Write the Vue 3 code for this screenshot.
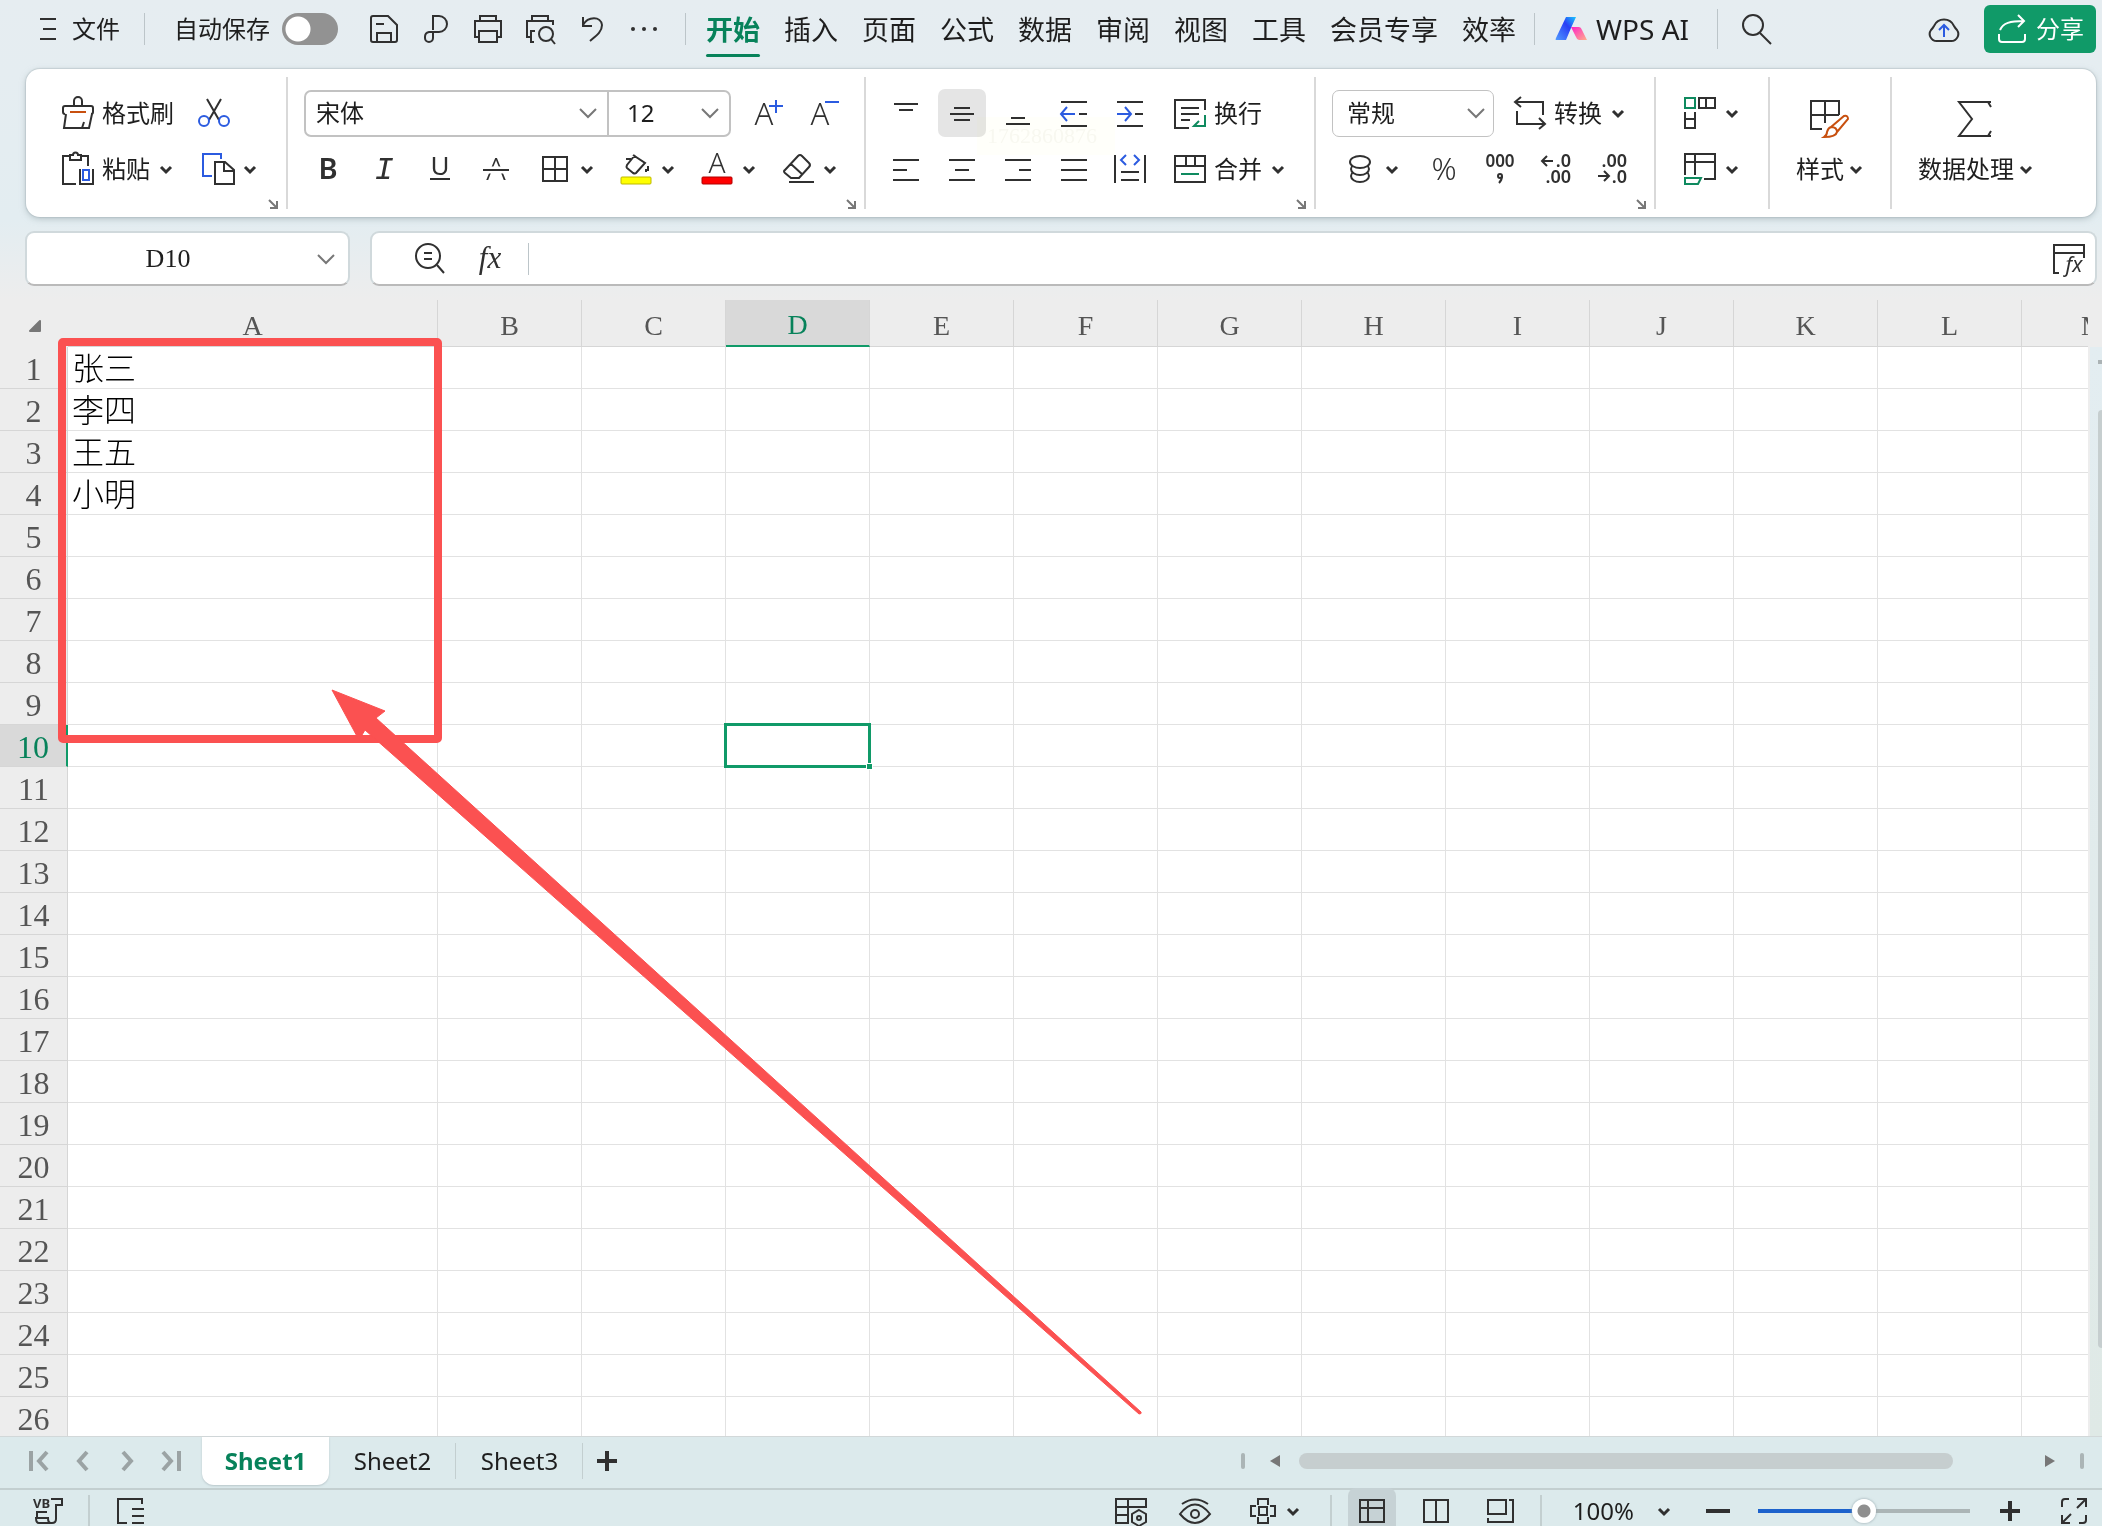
<script setup>
import { ref } from 'vue'

const autosave = ref(false)
const zoom = ref(50)
const nameBox = ref('D10')
const formula = ref('')

const G = '#0f8a5f'
const B = '#2b5be0'
const icons = {
  burger: '<path d="M0 2h16M3 12h13M0 22h16"/>',
  save: '<path d="M8 29H5a2 2 0 0 1-2-2V5a2 2 0 0 1 2-2h15l9 9v15a2 2 0 0 1-2 2h-3M8 11h8M9 29v-9h14v9z"/>',
  pdf: '<path d="M13 17V3h6a8 8 0 0 1 0 16H9a5 5 0 0 0-4 5v1a4 4 0 0 0 4 4a4 4 0 0 0 4-4v-6"/>',
  print: '<path d="M8 8V3h16v5M6 24H3V8h26v16h-3M7 18h18v11H7z"/>',
  preview: '<path d="M8 8V3h16v5M6 24H3V8h26v4M10 29H7V18h4"/><circle cx="22" cy="21" r="7"/><path d="M27 26l4 5"/>',
  undo: '<path d="M7 4v9h9M7 12C12 3 25 3 26 12c0 7-6 11-12 16"/>',
  more: '<g fill="#303030" stroke="none"><circle cx="5" cy="16" r="2"/><circle cx="16" cy="16" r="2"/><circle cx="27" cy="16" r="2"/></g>',
  search: '<circle cx="12" cy="12" r="10"/><path d="M19 20l11 11"/>',
  cloud: '<path d="M9 28a7 7 0 0 1-6-11q2-2 3-4a11 11 0 0 1 20 0q1 2 3 4a7 7 0 0 1-6 11z"/><path stroke="' + B + '" d="M16 24V12M11 17l5-5 5 5"/>',
  share: '<path stroke="#fff" d="M3 21v5a3 3 0 0 0 3 3h20a3 3 0 0 0 3-3v-5M4 17c3-7 10-9 24-9M22 2l6 6-6 6"/>',
  brush: '<path d="M12 9V4a4 4 0 0 1 8 0v5M3 17q-2 0-2-2v-4q0-2 2-2h26q2 0 2 2v4q0 2-2 2M4 17L2 31h25l3-14M22 25l-2 6"/><path stroke="#c8500f" d="M8 15h16"/>',
  cut: '<path d="M9 2l12 21M23 2L11 23"/><g stroke="' + B + '"><circle cx="6" cy="24" r="5"/><circle cx="26" cy="24" r="5"/></g>',
  paste: '<path d="M8 3H1v28h13M20 3h6v10M8 2h3a2 2 0 0 1 5 0h3v5H8zM18 16v15h13V16"/><path stroke="' + B + '" d="M21 17h6v10h-6z"/>',
  copy: '<path stroke="' + B + '" d="M10 23H1V1h18v5"/><path d="M13 9h10l9 8v14H13zM22 9v9h9"/>',
  chev: '<path stroke-width="3" d="M1 4l5 5 5-5"/>',
  launcher: '<path stroke="#777" d="M1 1l8 8M9 2v7H2"/>',
  grow: '<text x="9" y="28" font-size="31" font-weight="300" text-anchor="middle">A</text><path stroke="' + B + '" d="M21 3v13M14 9h14"/>',
  shrink: '<text x="9" y="28" font-size="31" font-weight="300" text-anchor="middle">A</text><path stroke="' + B + '" d="M14 5h14"/>',
  bold: '<text x="16" y="26" font-size="29" font-weight="600" text-anchor="middle">B</text>',
  italic: '<text x="16" y="26" font-size="32" font-style="italic" font-family="Liberation Mono, monospace" text-anchor="middle">I</text>',
  underline: '<text x="16" y="22" font-size="26" text-anchor="middle">U</text><path d="M6 26h20"/>',
  strike: '<text x="16" y="27" font-size="32" font-weight="300" text-anchor="middle">A</text><path d="M4 17h24" stroke="#fff" stroke-width="7"/><path d="M3 17h26"/>',
  borders: '<path d="M4 4h24v24H4zM16 4v24M4 16h24"/>',
  fill: '<path d="M13 2l12 8-9 10q-1 1-3 0l-6-5q-1-1 0-3L15 2M6 6h5M28 13v5M26 16v3"/><rect x="1" y="24" width="30" height="7" rx="1" fill="#ff0" stroke="#bdb800" stroke-width="1"/>',
  color: '<text x="16" y="20" font-size="28" font-weight="300" text-anchor="middle">A</text><rect x="1" y="24" width="30" height="7" rx="1" fill="#f00" stroke="#b00000" stroke-width="1"/>',
  eraser: '<path d="M3 17L16 3q2-2 4 0l7 7q2 2 0 4L17 25H9l-6-5q-2-2 0-3zM9 11l12 11M7 29h25"/>',
  atop: '<path d="M4 7h24M9 13h14"/>',
  amid: '<path d="M8 11h16M4 17h24M8 23h16"/>',
  abot: '<path d="M9 21h14M4 27h24"/>',
  outdent: '<path d="M3 5h26M21 17h8M3 29h26"/><path stroke="' + B + '" d="M17 17H4M9 10l-6 7 6 7"/>',
  indent: '<path d="M3 5h26M21 17h8M3 29h26"/><path stroke="' + B + '" d="M3 17h13M11 10l6 7-6 7"/>',
  wrap: '<path d="M15 31H1V3h30v10M7 11h18M7 17h18M7 23h9"/><path stroke="' + G + '" d="M31 18v11H21M25 24l-5 5h5"/>',
  left: '<path d="M3 7h26M3 17h14M3 27h26"/>',
  center: '<path d="M3 7h26M9 17h14M3 27h26"/>',
  right: '<path d="M3 7h26M17 17h12M3 27h26"/>',
  justify: '<path d="M3 7h26M3 17h26M3 27h26"/>',
  spread: '<path d="M1 2v28M31 2v28M7 19h18M7 27h18"/><path stroke="' + B + '" d="M12 2L7 7l5 5M20 2l5 5-5 5"/>',
  merge: '<path d="M1 3h30v26H1zM1 13h30M12 3v10M21 3v10"/><path stroke="' + G + '" d="M7 21h18"/>',
  convert: '<path d="M3 14v13h28M25 21l6 6-6 5M29 18V5H1M7 0L1 5l6 5"/>',
  coins: '<ellipse cx="16" cy="23" rx="9" ry="6"/><ellipse cx="16" cy="16" rx="9" ry="6" fill="#fff"/><ellipse cx="16" cy="9" rx="10" ry="6" fill="#fff"/>',
  percent: '<text x="16" y="27" font-size="31" font-weight="300" text-anchor="middle">%</text>',
  thousands: '<text x="16" y="14" font-size="17" font-weight="600" text-anchor="middle">000</text><circle cx="16" cy="23" r="2"/><path d="M18 23q0 4-3 7"/>',
  decLess: '<text x="31" y="14" font-size="18" font-weight="600" text-anchor="end">.0</text><text x="31" y="30" font-size="18" font-weight="600" text-anchor="end">.00</text><path d="M13 8H3M7 3L2 8l5 5"/>',
  decMore: '<text x="31" y="14" font-size="18" font-weight="600" text-anchor="end">.00</text><text x="31" y="30" font-size="18" font-weight="600" text-anchor="end">.0</text><path d="M2 23h11M8 18l5 5-5 5"/>',
  cells: '<path stroke="' + G + '" d="M1 1h10v10H1z"/><path d="M15 1h16v10H15zM22 1v10M1 15v16h10V15M1 22h10"/>',
  freeze: '<path d="M1 22V1h30v25H20M1 9h30M11 1v21"/><path stroke="' + G + '" d="M1 25h16l-3 6H1z"/>',
  style: '<path d="M13 30H2V2h28v14M2 16h28M16 2v22"/><path stroke="#c8500f" d="M22 28l13-11q4-1 4 3L28 33M22 28q6 0 6 5-1 5-13 5 3-2 3-5 1-4 4-5z"/>',
  sum: '<path d="M36 8l-3-5H4l13 17L4 37h29l3-5M36 3h-4M36 37h-4"/>',
  lookup: '<circle cx="14" cy="13" r="12"/><path d="M23 22l7 8M10 10h8M10 16h8"/>',
  fx: '<text x="16" y="25" font-size="31" font-style="italic" font-family="Liberation Serif, serif" text-anchor="middle">fx</text>',
  fxpanel: '<path d="M6 30H1V2h30v13M1 10h30"/><text x="21" y="29" font-size="21" font-style="italic" text-anchor="middle">fx</text>',
  first: '<path stroke="#9ba3a4" stroke-width="4" d="M3 3v20M19 4l-8 9 8 9"/>',
  prev: '<path stroke="#9ba3a4" stroke-width="4" d="M15 4l-8 9 8 9"/>',
  next: '<path stroke="#9ba3a4" stroke-width="4" d="M7 4l8 9-8 9"/>',
  last: '<path stroke="#9ba3a4" stroke-width="4" d="M19 3v20M3 4l8 9-8 9"/>',
  plus: '<path stroke-width="4" d="M12 2v20M2 12h20"/>',
  minus: '<path stroke-width="4" d="M0 12h24"/>',
  macro: '<text x="1" y="13" font-size="13" font-weight="700">VB</text><path d="M19 4h11v6h-6v14q0 4-4 4H7q-3 0-3-5h12q0 5 3 5M5 23v-6h10"/>',
  outline: '<path d="M12 28H3V4h24v5M17 14h12M17 21h12M17 28h12"/>',
  tableView: '<path d="M14 28H1V4h30v9M1 12h30M1 20h12M13 4v24"/><path d="M24 15l7 4v8l-7 4-7-4v-8z"/><circle cx="24" cy="23" r="2"/>',
  eye: '<path d="M1 19q15-19 30 0-15 18-30 0zM3 9q13-9 26 0"/><circle cx="16" cy="19" r="4"/>',
  cross: '<path d="M11 10V4h10v6M11 22v6h10v-6M9 11H4v10h5M23 11h5v10h-5M12 12h8v8h-8z"/>',
  normal: '<path d="M4 5h24v22H4zM4 13h24M12 5v22"/>',
  page: '<path d="M4 5h24v22H4zM16 5v22"/>',
  breaks: '<path d="M4 5h18v14H4zM25 5h4v22H4v-4"/>',
  full: '<path d="M4 12V7q0-3 3-3h4M19 4h9v8M28 4l-9 9M4 20v8h8M4 28l9-9M28 20v5q0 3-3 3h-4"/>'
}

const quick = [
  ['save', '保存'], ['pdf', '输出为PDF'], ['print', '打印'],
  ['preview', '打印预览'], ['undo', '撤销'], ['more', '更多']
]
const tabs = ['开始', '插入', '页面', '公式', '数据', '审阅', '视图', '工具', '会员专享', '效率']
const formats = ['bold', 'italic', 'underline', 'strike']
const drops = ['borders', 'fill', 'color', 'eraser']
const alignTop = ['atop', 'amid', 'abot', 'outdent', 'indent']
const alignBottom = ['left', 'center', 'right', 'justify', 'spread']
const numbers = ['percent', 'thousands', 'decLess', 'decMore']
const navs = ['first', 'prev', 'next', 'last']
const views = ['normal', 'page', 'breaks']
const sheets = ['Sheet1', 'Sheet2', 'Sheet3']

const columns = 'ABCDEFGHIJKLM'.split('')
const names = { 1: '张三', 2: '李四', 3: '王五', 4: '小明' }
</script>

<template>
  <div class="app">
    <header class="topbar">
      <button class="file"><svg class="burger" viewBox="0 0 16 24" v-html="icons.burger"></svg>文件</button>
      <i class="bar"></i>
      <label class="autosave">自动保存<input v-model="autosave" type="checkbox" class="toggle"></label>
      <div class="quick">
        <button v-for="q in quick" :key="q[0]" :aria-label="q[1]"><svg class="ic" viewBox="0 0 32 32" v-html="icons[q[0]]"></svg></button>
      </div>
      <i class="bar"></i>
      <nav class="tabs">
        <button v-for="(t, i) in tabs" :key="t" :class="{ on: i === 0 }">{{ t }}</button>
      </nav>
      <i class="bar"></i>
      <button class="ai">
        <svg class="ic" viewBox="0 0 32 32">
          <defs>
            <linearGradient id="aiBlue" x1="1" y1="0" x2="0" y2="1"><stop offset="0" stop-color="#18c8ff" /><stop offset=".4" stop-color="#2a3ff5" /><stop offset="1" stop-color="#4f9bff" /></linearGradient>
            <linearGradient id="aiPink" x1="0" y1="0" x2="1" y2="1"><stop offset="0" stop-color="#ff20c8" /><stop offset="1" stop-color="#ffb08a" /></linearGradient>
          </defs>
          <path d="M11 4h10l-5 11-5 12H1q-1 0 0-2z" fill="url(#aiBlue)" stroke="none" />
          <path d="M16 14h8q2 0 3 3l5 10h-8q-2 0-3-3z" fill="url(#aiPink)" stroke="none" />
        </svg>WPS AI
      </button>
      <i class="bar tall"></i>
      <button aria-label="搜索"><svg class="ic" viewBox="0 0 32 32" v-html="icons.search"></svg></button>
      <span class="grow"></span>
      <button aria-label="云同步"><svg class="ic" viewBox="0 0 32 32" v-html="icons.cloud"></svg></button>
      <button class="share"><svg class="ic" viewBox="0 0 32 32" v-html="icons.share"></svg>分享</button>
    </header>

    <section class="ribbon">
      <div class="group clip">
        <div class="row">
          <button class="cmd"><svg class="ic" viewBox="0 0 32 32" v-html="icons.brush"></svg>格式刷</button>
          <button aria-label="剪切"><svg class="ic" viewBox="0 0 32 32" v-html="icons.cut"></svg></button>
        </div>
        <div class="row wide">
          <button class="cmd"><svg class="ic" viewBox="0 0 32 32" v-html="icons.paste"></svg>粘贴<svg class="chev" viewBox="0 0 12 12" v-html="icons.chev"></svg></button>
          <button class="cmd" aria-label="复制"><svg class="ic" viewBox="0 0 32 32" v-html="icons.copy"></svg><svg class="chev" viewBox="0 0 12 12" v-html="icons.chev"></svg></button>
        </div>
        <button class="launcher" aria-label="剪贴板设置"><svg viewBox="0 0 10 10" v-html="icons.launcher"></svg></button>
      </div>

      <div class="group font">
        <div class="row">
          <div class="combo">
            <label class="pick"><select aria-label="字体"><option>宋体</option></select><svg viewBox="0 0 18 12"><path d="M1 2l8 8 8-8" /></svg></label>
            <label class="pick size"><select aria-label="字号"><option>12</option></select><svg viewBox="0 0 18 12"><path d="M1 2l8 8 8-8" /></svg></label>
          </div>
          <button aria-label="增大字号"><svg class="ic" viewBox="0 0 32 32" v-html="icons.grow"></svg></button>
          <button aria-label="减小字号"><svg class="ic" viewBox="0 0 32 32" v-html="icons.shrink"></svg></button>
        </div>
        <div class="row marks">
          <button v-for="f in formats" :key="f" :aria-label="f"><svg class="ic" viewBox="0 0 32 32" v-html="icons[f]"></svg></button>
          <button v-for="d in drops" :key="d" class="cmd" :aria-label="d"><svg class="ic" viewBox="0 0 32 32" v-html="icons[d]"></svg><svg class="chev" viewBox="0 0 12 12" v-html="icons.chev"></svg></button>
        </div>
        <button class="launcher" aria-label="字体设置"><svg viewBox="0 0 10 10" v-html="icons.launcher"></svg></button>
      </div>

      <div class="group align">
        <div class="row tiles">
          <button v-for="a in alignTop" :key="a" class="tile" :class="{ on: a === 'amid' }" :aria-label="a"><svg class="ic" viewBox="0 0 32 32" v-html="icons[a]"></svg></button>
          <button class="cmd"><svg class="ic" viewBox="0 0 32 32" v-html="icons.wrap"></svg>换行</button>
        </div>
        <div class="row tiles">
          <button v-for="a in alignBottom" :key="a" class="tile" :aria-label="a"><svg class="ic" viewBox="0 0 32 32" v-html="icons[a]"></svg></button>
          <button class="cmd"><svg class="ic" viewBox="0 0 32 32" v-html="icons.merge"></svg>合并<svg class="chev" viewBox="0 0 12 12" v-html="icons.chev"></svg></button>
        </div>
        <span class="ghost" aria-hidden="true">1762860876</span>
        <button class="launcher" aria-label="对齐设置"><svg viewBox="0 0 10 10" v-html="icons.launcher"></svg></button>
      </div>

      <div class="group number">
        <div class="row">
          <label class="pick general"><select aria-label="数字格式"><option>常规</option></select><svg viewBox="0 0 18 12"><path d="M1 2l8 8 8-8" /></svg></label>
          <button class="cmd"><svg class="ic" viewBox="0 0 32 32" v-html="icons.convert"></svg>转换<svg class="chev" viewBox="0 0 12 12" v-html="icons.chev"></svg></button>
        </div>
        <div class="row tiles">
          <button class="cmd coins" aria-label="货币"><svg class="ic" viewBox="0 0 32 32" v-html="icons.coins"></svg><svg class="chev" viewBox="0 0 12 12" v-html="icons.chev"></svg></button>
          <button v-for="n in numbers" :key="n" class="tile" :aria-label="n"><svg class="ic" viewBox="0 0 32 32" v-html="icons[n]"></svg></button>
        </div>
        <button class="launcher" aria-label="数字设置"><svg viewBox="0 0 10 10" v-html="icons.launcher"></svg></button>
      </div>

      <div class="group cells">
        <div class="row"><button class="cmd" aria-label="行和列"><svg class="ic" viewBox="0 0 32 32" v-html="icons.cells"></svg><svg class="chev" viewBox="0 0 12 12" v-html="icons.chev"></svg></button></div>
        <div class="row"><button class="cmd" aria-label="工作表"><svg class="ic" viewBox="0 0 32 32" v-html="icons.freeze"></svg><svg class="chev" viewBox="0 0 12 12" v-html="icons.chev"></svg></button></div>
      </div>

      <div class="group big">
        <button><span class="row"><svg class="ic40" viewBox="0 0 40 40" v-html="icons.style"></svg></span><span class="row">样式<svg class="chev" viewBox="0 0 12 12" v-html="icons.chev"></svg></span></button>
      </div>
      <div class="group big">
        <button><span class="row"><svg class="ic40" viewBox="0 0 40 40" v-html="icons.sum"></svg></span><span class="row">数据处理<svg class="chev" viewBox="0 0 12 12" v-html="icons.chev"></svg></span></button>
      </div>
    </section>

    <section class="formula">
      <div class="namebox"><input v-model="nameBox" aria-label="名称框"><svg viewBox="0 0 18 12"><path d="M1 2l8 8 8-8" /></svg></div>
      <div class="editor">
        <button aria-label="查找"><svg class="ic" viewBox="0 0 32 32" v-html="icons.lookup"></svg></button>
        <button aria-label="插入函数"><svg class="ic" viewBox="0 0 32 32" v-html="icons.fx"></svg></button>
        <i class="bar"></i>
        <input v-model="formula" aria-label="编辑栏">
        <button aria-label="函数面板"><svg class="ic" viewBox="0 0 32 32" v-html="icons.fxpanel"></svg></button>
      </div>
    </section>

    <main class="sheet">
      <div class="grid">
        <table>
          <colgroup><col class="c-head"><col class="c-a"><col v-for="c in 12" :key="c" class="c-n"></colgroup>
          <thead>
            <tr>
              <th class="corner"><svg viewBox="0 0 14 14"><path d="M12 2v10H2z" /></svg></th>
              <th v-for="c in columns" :key="c" scope="col" :class="{ on: c === 'D' }">{{ c }}</th>
            </tr>
          </thead>
          <tbody>
            <tr v-for="r in 26" :key="r">
              <th scope="row" :class="{ on: r === 10 }">{{ r }}</th>
              <td v-for="c in columns" :key="c">
                <template v-if="c === 'A'">{{ names[r] }}</template>
                <span v-if="c === 'D' && r === 10" class="cursor"></span>
              </td>
            </tr>
          </tbody>
        </table>
        <svg class="callout" width="1150" height="1130" viewBox="0 0 1150 1130">
          <rect x="62" y="42" width="376" height="397" rx="1" fill="none" stroke="#fb5151" stroke-width="8" stroke-linejoin="round" />
          <path d="M332 390l53 21-9 7 765 694q1 2-2 2L365 430l-6 10z" fill="#fb5151" stroke="#fb5151" stroke-width="1" />
        </svg>
      </div>
      <div class="vscroll"><i class="split"></i><i class="thumb"></i></div>
    </main>

    <footer>
      <div class="sheetbar">
        <div class="navs">
          <button v-for="n in navs" :key="n" :aria-label="n"><svg viewBox="0 0 22 26" v-html="icons[n]"></svg></button>
        </div>
        <button v-for="(s, i) in sheets" :key="s" class="stab" :class="{ on: i === 0 }">{{ s }}</button>
        <button class="add" aria-label="新建工作表"><svg viewBox="0 0 24 24" v-html="icons.plus"></svg></button>
        <span class="grow"></span>
        <div class="hscroll">
          <i class="grip"></i>
          <svg viewBox="0 0 10 12"><path d="M10 0v12L0 6z" /></svg>
          <span class="track"><i class="thumb"></i></span>
          <svg viewBox="0 0 10 12"><path d="M0 0v12l10-6z" /></svg>
          <i class="grip"></i>
        </div>
      </div>
      <div class="status">
        <button aria-label="宏"><svg class="ic" viewBox="0 0 32 32" v-html="icons.macro"></svg></button>
        <i class="bar"></i>
        <button aria-label="大纲"><svg class="ic" viewBox="0 0 32 32" v-html="icons.outline"></svg></button>
        <span class="grow"></span>
        <div class="tools">
          <button aria-label="表格视图"><svg class="ic" viewBox="0 0 32 32" v-html="icons.tableView"></svg></button>
          <button aria-label="护眼模式"><svg class="ic" viewBox="0 0 32 32" v-html="icons.eye"></svg></button>
          <button class="cmd" aria-label="阅读模式"><svg class="ic" viewBox="0 0 32 32" v-html="icons.cross"></svg><svg class="chev" viewBox="0 0 12 12" v-html="icons.chev"></svg></button>
        </div>
        <i class="bar"></i>
        <div class="views">
          <button v-for="v in views" :key="v" :class="{ on: v === 'normal' }" :aria-label="v"><svg class="ic" viewBox="0 0 32 32" v-html="icons[v]"></svg></button>
        </div>
        <i class="bar"></i>
        <button class="percent">100%<svg class="chev" viewBox="0 0 12 12" v-html="icons.chev"></svg></button>
        <button aria-label="缩小"><svg class="ic24" viewBox="0 0 24 24" v-html="icons.minus"></svg></button>
        <input v-model="zoom" type="range" min="0" max="100" aria-label="缩放">
        <button aria-label="放大"><svg class="ic24" viewBox="0 0 24 24" v-html="icons.plus"></svg></button>
        <button class="full" aria-label="全屏"><svg class="ic" viewBox="0 0 32 32" v-html="icons.full"></svg></button>
      </div>
    </footer>
  </div>
</template>

<style>
body {
  background: #ededed;
}
</style>

<style scoped>
.app {
  display: flex;
  flex-direction: column;
  height: 100vh;
  overflow: hidden;
  font: 24px/32px "Noto Sans", "Noto Sans CJK SC", sans-serif;
  color: #1e1e1e;
  background: linear-gradient(#e6edf1, #e3edf1 220px, #ededed 300px);
}
button {
  display: inline-flex;
  align-items: center;
  flex: none;
  padding: 0;
  border: 0;
  background: none;
  font: inherit;
  color: inherit;
  white-space: nowrap;
}
input,
select {
  font: inherit;
  color: inherit;
  border: 0;
  background: none;
  outline: 0;
  padding: 0;
  margin: 0;
  min-width: 0;
}
svg {
  display: block;
  flex: none;
  overflow: visible;
  fill: none;
  stroke: #303030;
  stroke-width: 2;
}
.ic :deep(text) {
  fill: #303030;
  stroke: none;
}
.ic {
  width: 32px;
  height: 32px;
}
.ic40 {
  width: 40px;
  height: 40px;
}
.ic24 {
  width: 24px;
  height: 24px;
}
.chev {
  width: 12px;
  height: 12px;
}
.bar {
  flex: none;
  width: 1px;
  height: 32px;
  background: #bcc5c9;
}
.grow {
  flex: 1;
}

.topbar {
  display: flex;
  align-items: center;
  height: 58px;
  padding: 0 6px 0 40px;
}
.file {
  gap: 16px;
  margin-right: 24px;
}
.burger {
  width: 16px;
  height: 24px;
}
.autosave {
  display: flex;
  align-items: center;
  gap: 12px;
  margin: 0 30px 0 29px;
  white-space: nowrap;
}
.toggle {
  appearance: none;
  width: 56px;
  height: 32px;
  border-radius: 16px;
  background: radial-gradient(circle at 16px 16px, #fff 12px, #929292 13px);
}
.quick {
  display: flex;
  gap: 20px;
  margin-right: 25px;
}
.tabs {
  display: flex;
  gap: 24px;
  margin: 0 18px 0 20px;
  font-size: 27px;
}
.tabs button {
  position: relative;
  box-sizing: border-box;
  height: 58px;
  padding-top: 2px;
}
.tabs .on {
  font-weight: 700;
  color: #07825a;
}
.tabs .on::after {
  content: "";
  position: absolute;
  left: 0;
  right: 0;
  bottom: 1px;
  height: 3px;
  border-radius: 2px;
  background: #07825a;
}
.ai {
  gap: 9px;
  margin: 0 28px 0 20px;
  font-size: 28px;
}
.bar.tall {
  height: 40px;
  margin-right: 23px;
}
.share {
  gap: 8px;
  width: 112px;
  height: 48px;
  margin-left: 24px;
  padding-left: 12px;
  box-sizing: border-box;
  border-radius: 6px;
  background: #109a68;
  color: #fff;
}

.ribbon {
  display: flex;
  margin: 11px 6px 0 26px;
  padding: 8px 0;
  border-radius: 14px;
  background: #fff;
  box-shadow: 0 2px 6px #9aa8ae99, 0 0 1px 1px #9aa8ae55;
}
.group {
  position: relative;
  display: flex;
  flex-direction: column;
  gap: 8px;
  height: 120px;
  padding-top: 12px;
  border-right: 2px solid #d9d9d9;
}
.group:last-child {
  border: 0;
}
.row {
  display: flex;
  align-items: center;
  height: 48px;
  gap: 24px;
}
.row.wide {
  gap: 30px;
}
.cmd {
  gap: 8px;
}
.cmd .chev {
  margin-left: 2px;
}
.clip {
  padding-left: 36px;
  padding-right: 30px;
}
.font {
  padding-left: 16px;
  padding-right: 21px;
}
.font .marks {
  padding-left: 8px;
}
.marks .cmd {
  margin-left: 3px;
}
.align {
  padding-left: 16px;
  padding-right: 30px;
}
.number {
  padding-left: 16px;
  padding-right: 18px;
}
.cells {
  padding-left: 28px;
  padding-right: 30px;
}
.launcher {
  position: absolute;
  right: 8px;
  bottom: 0;
}
.launcher svg {
  width: 10px;
  height: 10px;
}
.combo {
  display: flex;
  box-sizing: border-box;
  width: 427px;
  height: 47px;
  border: 2px solid #c2c2c2;
  border-radius: 7px;
}
.pick {
  display: flex;
  align-items: center;
  flex: 1;
  box-sizing: border-box;
  padding: 0 10px;
}
.pick select {
  appearance: none;
  flex: 1;
}
.pick svg,
.namebox svg {
  width: 18px;
  height: 12px;
  stroke: #777;
}
.pick.size {
  flex: none;
  width: 122px;
  padding-left: 18px;
  border-left: 2px solid #c2c2c2;
}
.pick.general {
  flex: none;
  width: 162px;
  height: 47px;
  padding: 0 8px 0 14px;
  border: 1px solid #c2c2c2;
  border-radius: 7px;
  margin-right: -4px;
}
.row.tiles {
  gap: 8px;
}
.tile {
  justify-content: center;
  width: 48px;
  height: 48px;
  border-radius: 7px;
}
.tile.on {
  background: #e5e5e5;
}
.tiles .tile + .cmd {
  margin-left: 12px;
}
.coins {
  padding: 0 14px 0 12px;
}
.ghost {
  position: absolute;
  left: 111px;
  top: 40px;
  padding: 3px 18px 3px 10px;
  font: 22px/32px "Liberation Serif", serif;
  color: #f8f8f0;
  background: #fffffa;
  mix-blend-mode: multiply;
  pointer-events: none;
}
.big {
  padding-left: 26px;
  padding-right: 28px;
}
.big button {
  flex-direction: column;
  gap: 8px;
}
.big .row {
  gap: 6px;
}
.big .row:first-child {
  height: 60px;
  margin-bottom: -12px;
}

.formula {
  display: flex;
  gap: 20px;
  margin: 14px 5px 14px 25px;
}
.namebox,
.editor {
  display: flex;
  align-items: center;
  box-sizing: border-box;
  height: 55px;
  border: 2px solid #d0d9dc;
  border-bottom-color: #bababa;
  border-radius: 9px;
  background: #fff;
}
.namebox {
  width: 325px;
  padding: 0 13px 0 0;
  font-family: "Liberation Serif", serif;
  font-size: 26px;
}
.namebox input {
  flex: 1;
  padding-right: 8px;
  text-align: center;
}
.editor {
  flex: 1;
  padding: 0 10px 0 42px;
}
.editor button:nth-child(2) {
  margin: 0 22px 0 28px;
}
.editor input {
  flex: 1;
}

.sheet {
  display: flex;
  flex: 1;
  min-height: 0;
}
.grid {
  position: relative;
  flex: 1;
  min-width: 0;
  overflow: hidden;
  background: #fff;
}
table {
  table-layout: fixed;
  width: 2166px;
  border-spacing: 0;
  font: 32px/38px "Liberation Serif", "Noto Sans CJK SC", serif;
}
.c-head {
  width: 68px;
}
.c-a {
  width: 370px;
}
.c-n {
  width: 144px;
}
th,
td {
  box-sizing: border-box;
  height: 42px;
  padding: 3px 0 0;
  border-right: 1px solid #e2e2e2;
  border-bottom: 1px solid #e2e2e2;
  line-height: 38px;
}
th {
  font-weight: 400;
  color: #555;
  background: #ededed;
  border-color: #d6d6d6;
}
thead th {
  height: 47px;
  padding-top: 5px;
  font-size: 28px;
}
.corner {
  border-color: #ededed;
}
.corner svg {
  width: 14px;
  height: 14px;
  margin-left: 28px;
  fill: #777;
  stroke: #777;
  stroke-linejoin: round;
}
th.on {
  color: #07825a;
  background: #d9d9d9;
}
thead th.on {
  border-bottom: 2px solid #109a68;
}
tbody th.on {
  border-right: 2px solid #109a68;
}
td {
  position: relative;
  padding-left: 4px;
  font-weight: 300;
  color: #000;
}
.cursor {
  position: absolute;
  inset: -2px;
  border: 3px solid #109a68;
  z-index: 1;
}
.cursor::after {
  content: "";
  position: absolute;
  right: -5px;
  bottom: -5px;
  width: 5px;
  height: 5px;
  border: 1px solid #fff;
  background: #109a68;
}
.callout {
  position: absolute;
  left: 0;
  top: 0;
  z-index: 2;
}
.vscroll {
  display: flex;
  flex-direction: column;
  align-items: flex-end;
  width: 12px;
  margin-top: 47px;
  border-left: 2px solid #ededed;
  background: linear-gradient(#e3edf1, #dfe9e6);
}
.split {
  width: 4px;
  height: 4px;
  margin-top: 13px;
  background: #abb3b5;
}
.vscroll .thumb {
  flex: 1;
  width: 4px;
  margin: 46px 0 88px;
  border-radius: 4px 0 0 4px;
  background: #c6cecf;
}

.sheetbar {
  display: flex;
  align-items: center;
  box-sizing: border-box;
  height: 52px;
  padding: 0 18px 3px 28px;
  border-top: 1px solid #d2d8d9;
  background: #dceaec;
}
.navs {
  display: flex;
  gap: 22px;
  margin-right: 20px;
}
.navs svg {
  width: 22px;
  height: 26px;
}
.stab {
  position: relative;
  justify-content: center;
  width: 127px;
  height: 48px;
}
.stab + .stab:not(.on)::after {
  content: "";
  position: absolute;
  right: 0;
  top: 6px;
  width: 1px;
  height: 36px;
  background: #c3cfd0;
}
.stab.on {
  border-radius: 0 0 12px 12px;
  background: #fff;
  font-weight: 700;
  color: #07825a;
  box-shadow: 0 1px 2px #9aa8ae88;
}
.add {
  margin-left: 12px;
}
.add svg {
  width: 24px;
  height: 24px;
}
.hscroll {
  display: flex;
  align-items: center;
  width: 41%;
}
.hscroll svg {
  width: 10px;
  height: 12px;
  fill: #777;
  stroke: none;
}
.grip {
  width: 4px;
  height: 16px;
  border-radius: 2px;
  background: #abb5b6;
}
.grip + svg {
  margin-left: 25px;
}
.hscroll svg + .grip {
  margin-left: 25px;
}
.track {
  flex: 1;
  margin: 0 19px;
}
.hscroll .thumb {
  display: block;
  width: 90%;
  height: 16px;
  border-radius: 8px;
  background: #c6cecf;
}
.status {
  display: flex;
  align-items: center;
  box-sizing: border-box;
  height: 38px;
  padding: 6px 12px 0 32px;
  border-top: 2px solid #c3cfd0;
  background: #dceaec;
}
.status > .bar {
  width: 2px;
  margin: 0 25px;
  background: #c3cfd0;
}
.status > .bar:nth-of-type(1) {
  margin-left: 24px;
}
.tools {
  display: flex;
  gap: 32px;
}
.tools .cmd {
  gap: 6px;
  margin-left: 4px;
  padding-right: 6px;
}
.views {
  display: flex;
  gap: 16px;
  margin: 0 -9px;
}
.views button {
  justify-content: center;
  width: 48px;
  height: 46px;
}
.views .on {
  border-radius: 8px;
  background: #c6d2d5;
}
.percent {
  gap: 24px;
  margin: 0 36px 0 6px;
}
.status input {
  appearance: none;
  width: 212px;
  height: 24px;
  margin: 0 28px;
  background: linear-gradient(90deg, #1c62cc 50%, #abb5b6 50%) center / 100% 4px no-repeat;
}
.status input::-webkit-slider-thumb {
  appearance: none;
  width: 24px;
  height: 24px;
  border-radius: 50%;
  background: radial-gradient(circle, #8f8f8f 6px, #fff 7px);
  box-shadow: 0 0 2px 1px #9aa8ae88;
}
.full {
  margin-left: 36px;
}
</style>
